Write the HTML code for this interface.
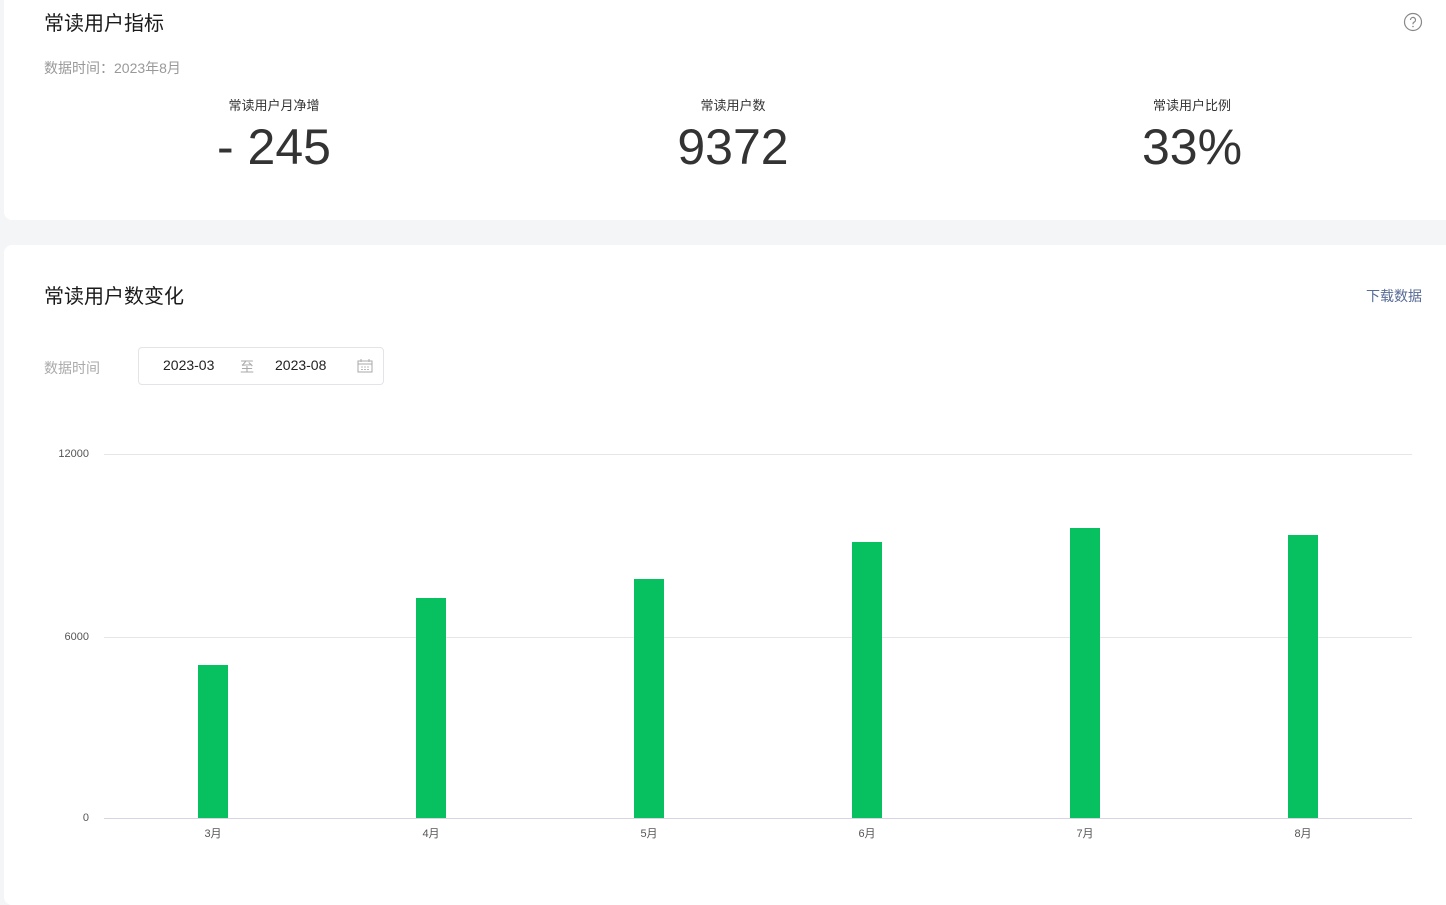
<!DOCTYPE html>
<html><head><meta charset="utf-8"><style>
body{margin:0;width:1446px;height:895px;background:#f4f5f7;font-family:"Liberation Sans","Noto Sans CJK SC",sans-serif;position:relative;overflow:hidden}
.card{position:absolute;background:#fff;border-radius:8px}
.a{position:absolute;white-space:nowrap}
.bar{position:absolute;width:30px;background:#07c160;bottom:77px}
.gl{position:absolute;left:104px;width:1308px;height:1px;background:#e6e6ea}
.yl{position:absolute;font-size:11px;color:#555;right:1357px}
.xl{position:absolute;font-size:11px;color:#555;top:825px;width:40px;text-align:center}
</style></head><body>
<div class="card" style="left:4px;top:-10px;width:1450px;height:230px"></div>
<div class="card" style="left:4px;top:245px;width:1450px;height:660px"></div>
<div class="a" style="left:44px;top:7px;font-size:20px;color:#1a1a1a">常读用户指标</div>
<div class="a" style="left:44px;top:58px;font-size:14px;color:#999">数据时间：2023年8月</div>
<svg class="a" style="left:1403px;top:12px" width="20" height="20" viewBox="0 0 20 20"><circle cx="10" cy="10" r="8.5" fill="none" stroke="#888" stroke-width="1.2"/><path d="M7.5 8a2.5 2.5 0 1 1 3.5 2.2c-.7.4-1 .8-1 1.6v.5" fill="none" stroke="#888" stroke-width="1.2"/><circle cx="10" cy="14.5" r=".8" fill="#888"/></svg>
<div class="a" style="left:174px;width:200px;text-align:center;top:95px;font-size:13px;color:#333">常读用户月净增</div>
<div class="a" style="left:174px;width:200px;text-align:center;top:118px;font-size:50px;color:#333">- 245</div>
<div class="a" style="left:633px;width:200px;text-align:center;top:95px;font-size:13px;color:#333">常读用户数</div>
<div class="a" style="left:633px;width:200px;text-align:center;top:118px;font-size:50px;color:#333">9372</div>
<div class="a" style="left:1092px;width:200px;text-align:center;top:95px;font-size:13px;color:#333">常读用户比例</div>
<div class="a" style="left:1092px;width:200px;text-align:center;top:118px;font-size:50px;color:#333">33%</div>
<div class="a" style="left:44px;top:280px;font-size:20px;color:#1a1a1a">常读用户数变化</div>
<div class="a" style="left:1366px;top:286px;font-size:14px;color:#576b95">下载数据</div>
<div class="a" style="left:44px;top:358px;font-size:14px;color:#aaa">数据时间</div>
<div class="a" style="left:138px;top:347px;width:244px;height:36px;border:1px solid #e4e4e8;border-radius:4px"></div>
<div class="a" style="left:163px;top:357px;font-size:14px;color:#222">2023-03</div>
<div class="a" style="left:240px;top:357px;font-size:14px;color:#aaa">至</div>
<div class="a" style="left:275px;top:357px;font-size:14px;color:#222">2023-08</div>
<svg class="a" style="left:357px;top:359px" width="16" height="14" viewBox="0 0 16 14"><rect x="1" y="2" width="14" height="11" fill="none" stroke="#aaa"/><path d="M1 5h14M4 0v3M12 0v3" stroke="#aaa"/><path d="M4 8h2M7 8h2M10 8h2M4 10.5h2M7 10.5h2M10 10.5h2" stroke="#bbb"/></svg>
<div class="gl" style="top:454px"></div>
<div class="gl" style="top:637px"></div>
<div class="gl" style="top:818px;background:#d8d4e6"></div>
<div class="yl" style="top:448px">12000</div>
<div class="yl" style="top:631px">6000</div>
<div class="yl" style="top:812px">0</div>
<div class="bar" style="left:198px;top:665px"></div>
<div class="bar" style="left:416px;top:598px"></div>
<div class="bar" style="left:634px;top:579px"></div>
<div class="bar" style="left:852px;top:542px"></div>
<div class="bar" style="left:1070px;top:528px"></div>
<div class="bar" style="left:1288px;top:535px"></div>
<div class="xl" style="left:193px">3月</div>
<div class="xl" style="left:411px">4月</div>
<div class="xl" style="left:629px">5月</div>
<div class="xl" style="left:847px">6月</div>
<div class="xl" style="left:1065px">7月</div>
<div class="xl" style="left:1283px">8月</div>
</body></html>
